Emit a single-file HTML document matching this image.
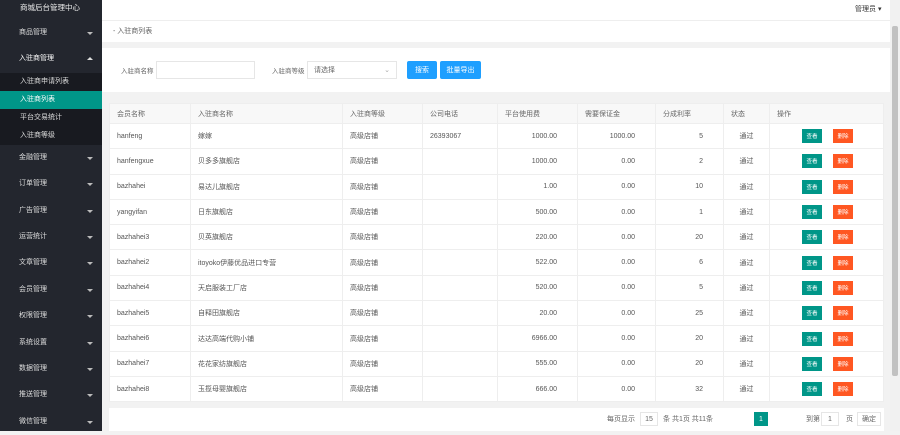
<!DOCTYPE html>
<html><head><meta charset="utf-8"><style>
*{margin:0;padding:0;box-sizing:border-box}
body{width:900px;height:431px;overflow:hidden;font-family:"Liberation Sans","Noto Sans CJK SC",sans-serif;font-size:7px;color:#555;background:#f2f2f2;position:relative}
.side{position:absolute;left:0;top:0;width:102px;height:431px;background:#23262e;color:#ddd}
.side .t{height:20px;line-height:16px;padding-left:20px;font-size:7.5px;color:#eee}
.mi{height:26.4px;line-height:26px;padding-left:19px;position:relative;color:#ddd}
.mi:after{content:"";position:absolute;right:9px;top:12px;border:3px solid transparent;border-top-color:#bbb}
.mi.up:after{border-top-color:transparent;border-bottom-color:#ddd;top:8px}
.sub{background:#181a20}
.sub div{height:18px;line-height:18px;padding-left:20px;color:#ddd}
.sub .on{background:#009688;color:#fff}
.top{position:absolute;left:102px;top:0;width:788px;height:20px;background:#fff}
.scroll{position:absolute;left:890px;top:0;width:10px;height:431px;background:#f1f1f1}
.scroll div{position:absolute;left:2px;top:26px;width:6px;height:350px;background:#c1c1c1;border-radius:2px}
.bc{position:absolute;left:102px;top:20px;width:788px;height:22px;background:#fff;border-top:1px solid #eee;line-height:22px;padding-left:11px;color:#666}
.sp{position:absolute;left:102px;top:48px;width:788px;height:44px;background:#fff}
.lb{position:absolute;top:13px;height:18px;display:flex;align-items:center;color:#666;font-size:6.5px}
.in{position:absolute;top:13px;height:18px;border:1px solid #e6e6e6;background:#fff;display:flex;align-items:center}
.bt{position:absolute;top:13px;height:18px;background:#1e9fff;color:#fff;display:flex;align-items:center;justify-content:center;border-radius:2px}
table{position:absolute;left:109px;top:103px;width:775px;border-collapse:collapse;background:#fff}
td,th{border:1px solid #eee;height:25.3px;padding-left:7px;font-weight:normal;text-align:left;color:#555;white-space:nowrap;vertical-align:middle}
th{height:20px;background:#f8f8f8;color:#666}
td.r{text-align:right;padding-right:20px}
td.c{text-align:center;padding:0}
.b1,.b2{display:inline-flex;align-items:center;justify-content:center;width:20px;height:14px;color:#fff;font-size:5.5px;margin-left:25px;vertical-align:middle}
.b1{background:#009688}.b2{background:#ff5722;margin-left:11px}
.pg{position:absolute;left:109px;top:408px;width:775px;height:23px;background:#fff;color:#666}
.pg span{position:absolute;top:4px;height:14px;display:flex;align-items:center}
.box{position:absolute;top:4px;height:14px;border:1px solid #e6e6e6;display:flex;align-items:center;justify-content:center}
</style></head><body>
<div class="side">
<div class="t">商城后台管理中心</div>
<div class="mi">商品管理</div>
<div class="mi up" style="color:#fff">入驻商管理</div>
<div class="sub"><div>入驻商申请列表</div><div class="on">入驻商列表</div><div>平台交易统计</div><div>入驻商等级</div></div>
<div class="mi">金融管理</div><div class="mi">订单管理</div><div class="mi">广告管理</div><div class="mi">运营统计</div><div class="mi">文章管理</div><div class="mi">会员管理</div><div class="mi">权限管理</div><div class="mi">系统设置</div><div class="mi">数据管理</div><div class="mi">推送管理</div><div class="mi">微信管理</div>
</div>
<div class="top"><span style="position:absolute;left:753px;top:4px;color:#333">管理员 ▾</span></div>
<div class="bc">- 入驻商列表</div>
<div class="sp">
<span class="lb" style="left:19px">入驻商名称</span><div class="in" style="left:54px;width:99px"></div>
<span class="lb" style="left:170px">入驻商等级</span><div class="in" style="left:205px;width:90px;padding:0 6px;color:#666;justify-content:space-between"><span>请选择</span><span style="color:#aaa">⌄</span></div>
<div class="bt" style="left:305px;width:30px">搜索</div><div class="bt" style="left:338px;width:41px">批量导出</div>
</div>
<table>
<tr><th style="width:81px">会员名称</th><th style="width:152px">入驻商名称</th><th style="width:80px">入驻商等级</th><th style="width:75px">公司电话</th><th style="width:80px">平台使用费</th><th style="width:78px">需要保证金</th><th style="width:68px">分成利率</th><th style="width:46px">状态</th><th>操作</th></tr>
<tr><td>hanfeng</td><td>嫁嫁</td><td>高级店铺</td><td>26393067</td><td class="r">1000.00</td><td class="r">1000.00</td><td class="r">5</td><td class="c">通过</td><td><span class="b1">查看</span><span class="b2">删除</span></td></tr>
<tr><td>hanfengxue</td><td>贝多多旗舰店</td><td>高级店铺</td><td></td><td class="r">1000.00</td><td class="r">0.00</td><td class="r">2</td><td class="c">通过</td><td><span class="b1">查看</span><span class="b2">删除</span></td></tr>
<tr><td>bazhahei</td><td>易达儿旗舰店</td><td>高级店铺</td><td></td><td class="r">1.00</td><td class="r">0.00</td><td class="r">10</td><td class="c">通过</td><td><span class="b1">查看</span><span class="b2">删除</span></td></tr>
<tr><td>yangyifan</td><td>日东旗舰店</td><td>高级店铺</td><td></td><td class="r">500.00</td><td class="r">0.00</td><td class="r">1</td><td class="c">通过</td><td><span class="b1">查看</span><span class="b2">删除</span></td></tr>
<tr><td>bazhahei3</td><td>贝英旗舰店</td><td>高级店铺</td><td></td><td class="r">220.00</td><td class="r">0.00</td><td class="r">20</td><td class="c">通过</td><td><span class="b1">查看</span><span class="b2">删除</span></td></tr>
<tr><td>bazhahei2</td><td>itoyoko伊藤优品进口专营</td><td>高级店铺</td><td></td><td class="r">522.00</td><td class="r">0.00</td><td class="r">6</td><td class="c">通过</td><td><span class="b1">查看</span><span class="b2">删除</span></td></tr>
<tr><td>bazhahei4</td><td>天启服装工厂店</td><td>高级店铺</td><td></td><td class="r">520.00</td><td class="r">0.00</td><td class="r">5</td><td class="c">通过</td><td><span class="b1">查看</span><span class="b2">删除</span></td></tr>
<tr><td>bazhahei5</td><td>自释田旗舰店</td><td>高级店铺</td><td></td><td class="r">20.00</td><td class="r">0.00</td><td class="r">25</td><td class="c">通过</td><td><span class="b1">查看</span><span class="b2">删除</span></td></tr>
<tr><td>bazhahei6</td><td>达达高端代购小铺</td><td>高级店铺</td><td></td><td class="r">6966.00</td><td class="r">0.00</td><td class="r">20</td><td class="c">通过</td><td><span class="b1">查看</span><span class="b2">删除</span></td></tr>
<tr><td>bazhahei7</td><td>花花家纺旗舰店</td><td>高级店铺</td><td></td><td class="r">555.00</td><td class="r">0.00</td><td class="r">20</td><td class="c">通过</td><td><span class="b1">查看</span><span class="b2">删除</span></td></tr>
<tr><td>bazhahei8</td><td>玉揽母婴旗舰店</td><td>高级店铺</td><td></td><td class="r">666.00</td><td class="r">0.00</td><td class="r">32</td><td class="c">通过</td><td><span class="b1">查看</span><span class="b2">删除</span></td></tr>
</table>
<div class="pg">
<span style="left:498px">每页显示</span><div class="box" style="left:531px;width:18px">15</div><span style="left:554px">条 共1页 共11条</span>
<div class="box" style="left:645px;width:14px;background:#009688;color:#fff;border-color:#009688">1</div>
<span style="left:697px">到第</span><div class="box" style="left:712px;width:18px">1</div><span style="left:737px">页</span><div class="box" style="left:748px;width:24px">确定</div>
</div>
<div class="scroll"><div></div></div>
</body></html>
